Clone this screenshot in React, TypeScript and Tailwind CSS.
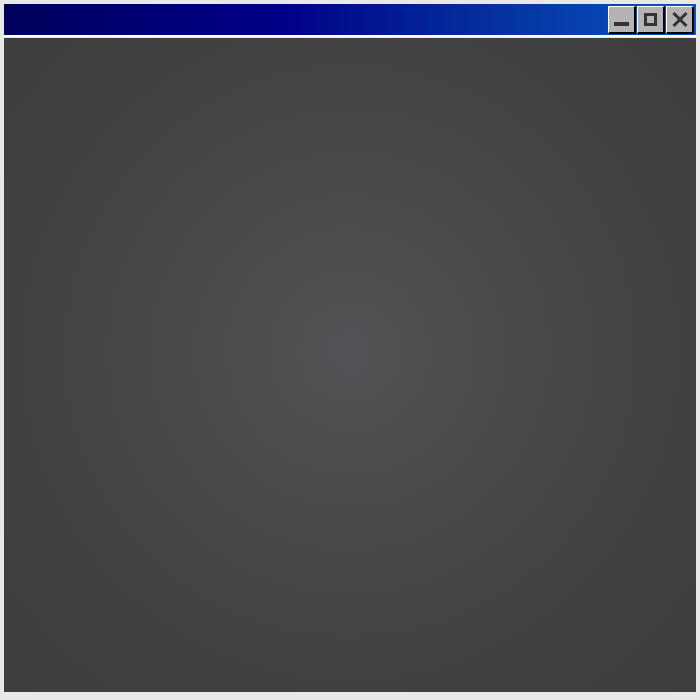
import React from "react";

function CaptionButton({ children }: { children: React.ReactNode }) {
  return (
    <div className="flex h-[28px] w-[28px] items-center justify-center border-t border-l border-r-2 border-b-2 border-t-white border-l-white border-r-black border-b-black bg-[#b4b4b4]">
      {children}
    </div>
  );
}

export default function App() {
  return (
    <div className="flex h-[700px] w-[700px] flex-col bg-[#e8e8e8] px-1 pt-1 pb-2">
      {/* title bar */}
      <div className="flex h-[31px] shrink-0 items-start justify-end gap-px bg-[linear-gradient(to_right,#00005c_0%,#00007a_25%,#000088_40%,#04309e_70%,#0a56c2_100%)] pt-[2px] pr-[2px]">
        <CaptionButton>
          <div className="mt-[8px] h-[4px] w-[15px] bg-[#333]" />
        </CaptionButton>
        <CaptionButton>
          <div className="h-[13px] w-[13px] border-[3px] border-[#333]" />
        </CaptionButton>
        <CaptionButton>
          <svg width="16" height="15" viewBox="0 0 16 15">
            <path d="M1.5 1 L14.5 14 M14.5 1 L1.5 14" stroke="#333" strokeWidth="3" />
          </svg>
        </CaptionButton>
      </div>
      <div className="h-[2px] shrink-0 bg-white" />
      <div className="mt-px flex-1 bg-[radial-gradient(circle_at_50%_48%,#545458_0%,#4a4a4c_30%,#414141_70%,#3e3e3e_100%)]" />
    </div>
  );
}
